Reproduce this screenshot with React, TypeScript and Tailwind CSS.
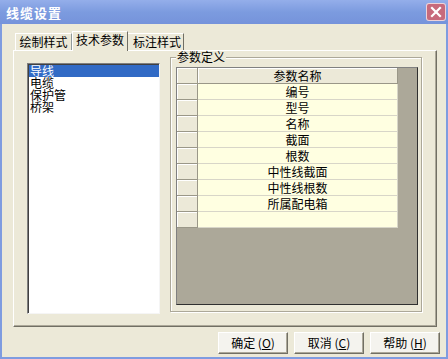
import React from "react";

const font = { fontFamily: '"Noto Sans CJK SC", "DejaVu Sans", sans-serif' };

const rows = ["编号", "型号", "名称", "截面", "根数", "中性线截面", "中性线根数", "所属配电箱", ""];
const items = ["导线", "电缆", "保护管", "桥架"];

const Btn = ({ label, k }: { label: string; k: string }) => (
  <button className="w-[70px] h-[22px] bg-[#f4f3ee] border border-t-white border-l-white border-r-[#716f64] border-b-[#716f64] shadow-[inset_-1px_-1px_0_#aca899] text-[12px] leading-none text-black">
    {label} (<u>{k}</u>)
  </button>
);

export default function App() {
  return (
    <div className="w-[448px] h-[359px] flex flex-col bg-[#ece9d8] text-black" style={font}>
      <div className="h-[24px] shrink-0 flex items-center justify-between pl-[6px] pr-[2px] bg-gradient-to-b from-[#94aeea] via-[#7c9bdf] to-[#7593db]">
        <span className="text-white text-[13px] font-bold leading-none tracking-[1px]">线缆设置</span>
        <div className="w-[20px] h-[18px] rounded-[3px] border border-white/70 bg-[#c76a7c] flex items-center justify-center">
          <svg width="12" height="12" viewBox="0 0 12 12">
            <path d="M2 2 L10 10 M10 2 L2 10" stroke="white" strokeWidth="2.2" strokeLinecap="square" />
          </svg>
        </div>
      </div>

      <div className="flex-1 flex flex-col border-x-2 border-b-2 border-[#7f9ce0]">
        <div className="h-[26px] flex items-end pl-[11px] pt-[6px]">
          <div className="h-[17px] w-[57px] ml-[2px] border border-b-0 border-t-white border-l-white border-r-[#919b9c] flex items-center justify-center text-[12px] leading-none">
            绘制样式
          </div>
          <div className="h-[20px] w-[56px] -mb-px z-10 bg-[#ece9d8] border border-b-0 border-t-white border-l-white border-r-[#716f64] flex items-center justify-center text-[12px] leading-none pb-[3px]">
            技术参数
          </div>
          <div className="h-[17px] w-[56px] border border-b-0 border-t-white border-l-0 border-r-[#716f64] flex items-center justify-center text-[12px] leading-none pl-[3px]">
            标注样式
          </div>
        </div>

        <div className="ml-[11px] w-[424px] h-[277px] flex items-start border border-t-white border-l-white border-r-[#716f64] border-b-[#716f64] shadow-[inset_-1px_-1px_0_#aca899]">
          <div className="ml-[13px] mt-[12px] w-[133px] h-[251px] bg-white border border-t-[#7f7f7f] border-l-[#7f7f7f] border-r-[#f5f5f5] border-b-[#f5f5f5] shadow-[inset_1px_1px_0_#404040]">
            <div className="pt-[1px] pl-[1px] text-[12px] leading-[12px]">
              {items.map((it, i) => (
                <div key={it} className={i === 0 ? "bg-[#316ac5] text-white pl-[1px] h-[12px]" : "pl-[1px] h-[12px]"}>
                  {it}
                </div>
              ))}
            </div>
          </div>

          <div className="relative ml-[10px] mt-[6px] w-[252px] h-[255px] border border-[#aca899] shadow-[inset_1px_1px_0_white,1px_1px_0_white]">
            <span className="absolute -top-[7px] left-[5px] px-[1px] bg-[#ece9d8] text-[12px] leading-[12px]">参数定义</span>
            <div className="ml-[5px] mt-[9px] w-[242px] h-[238px] bg-[#aca899] border border-t-[#808080] border-l-[#808080] border-r-[#303030] border-b-[#303030]">
              <div className="flex h-[16px]">
                <div className="w-[21px] bg-[#ece9d8] border-r border-b border-[#9a9788] shadow-[inset_1px_1px_0_white]" />
                <div className="w-[200px] bg-[#ece9d8] border-r border-b border-[#9a9788] shadow-[inset_1px_1px_0_white] text-[12px] leading-[15px] text-center">
                  参数名称
                </div>
              </div>
              {rows.map((r, i) => (
                <div key={i} className="flex h-[16px]">
                  <div className="w-[21px] bg-[#ece9d8] border-r border-b border-[#9a9788] shadow-[inset_1px_1px_0_white]" />
                  <div className="w-[200px] bg-[#ffffe1] border-r border-b border-[#d8d6c8] text-[12px] leading-[15px] text-center">
                    {r}
                  </div>
                </div>
              ))}
            </div>
          </div>
        </div>

        <div className="flex justify-end gap-[6px] pr-[6px] mt-[5px]">
          <Btn label="确定" k="O" />
          <Btn label="取消" k="C" />
          <Btn label="帮助" k="H" />
        </div>
      </div>
    </div>
  );
}
